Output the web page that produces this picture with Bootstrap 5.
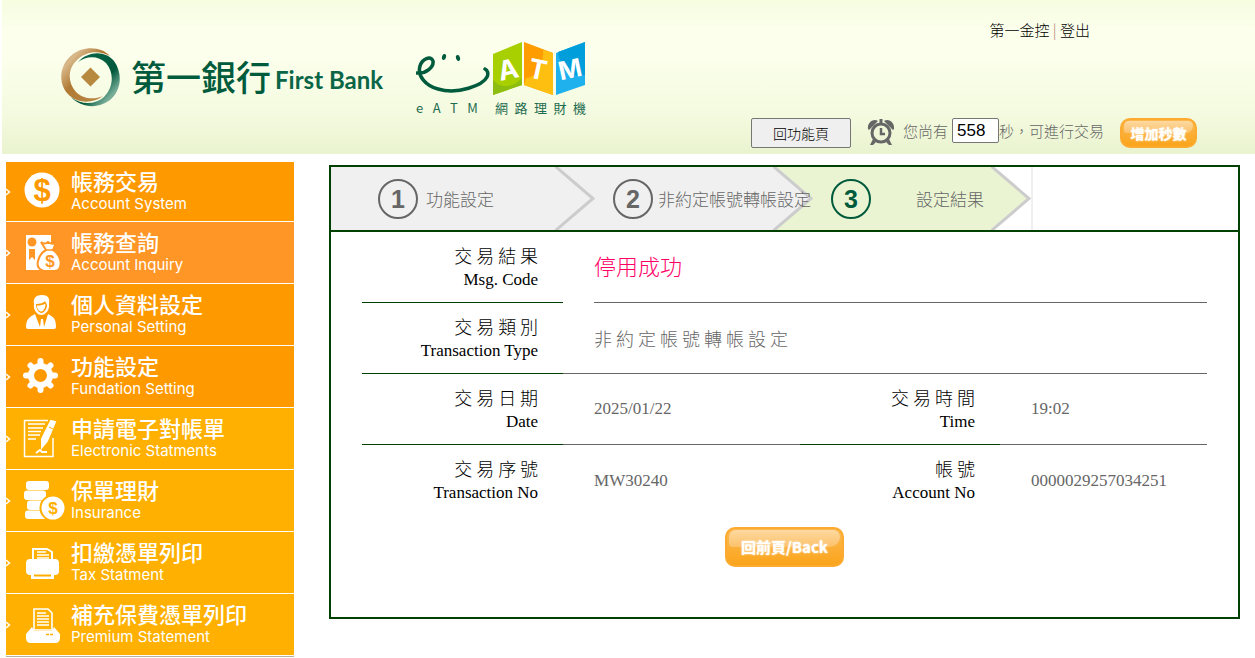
<!DOCTYPE html>
<html lang="zh-Hant">
<head>
<meta charset="utf-8">
<meta name="viewport" content="width=device-width, initial-scale=1">
<title>第一銀行 eATM</title>
<link href="https://cdn.jsdelivr.net/npm/bootstrap@5.3.0/dist/css/bootstrap.min.css" rel="stylesheet">
<style>
  body { font-family: "Liberation Serif", "Noto Sans CJK TC", serif; font-size: 17px; line-height: 22px; color: #000; background: #fff; }
  .zh { font-family: "Noto Sans CJK TC", sans-serif; font-weight: 300; }
  .site-head { margin-left: 2px; padding: 19px 58px 6px 59px; min-height: 154px; background: linear-gradient(#f6fde0 0, #fbffeb 28px, #fbffeb 60px, #f4fadf 115px, #e9f3cf 100%); }
  .brand-zh { font: 500 35px/40px "Noto Sans CJK TC", sans-serif; color: #005a3c; }
  .brand-en { font: 700 24px/32px Lato, sans-serif; color: #0b6648; }
  .brand { padding-top: 29px; gap: 11px; }
  .eatm { margin-left: 33px; padding-top: 22px; }
  .eatm-caption { font: 400 13px/18px "Noto Sans CJK TC", sans-serif; color: #1d6b50; }
  .util { margin-right: 107px; font-size: 15px; color: #b07c70; }
  .util a { color: #000; text-decoration: none; }
  .timer { font-size: 15px; line-height: 26px; color: #666; }
  .btn-plain { width: 100px; height: 30px; padding: 0; font-size: 14px; background: #efefef; border: 1px solid #767676; border-radius: 2px; color: #000; }
  .sec-box { width: 47px; height: 25px; padding: 0 4px; border: 1px solid #767676; border-radius: 2px; font: 17px/22px "Liberation Sans", sans-serif; }
  .btn-gloss { position: relative; padding: 0; border: 2px solid #fcab30; background: linear-gradient(#fbb851, #fbae35 55%, #fba41b); color: #fff; font: 700 14px/20px "Noto Sans CJK TC", sans-serif; text-shadow: 0 0 2px #fff; border-radius: 10px; }
  .btn-gloss::before { content: ""; position: absolute; inset: 1px 2px 50% 2px; border-radius: 8px 8px 12px 4px; background: linear-gradient(#fdd9a0, #fcc16a); }
  .btn-gloss span { position: relative; }
  .btn-more { width: 77px; height: 30px; }
  .btn-back { width: 119px; height: 40px; margin-top: 11px; font-size: 15px; }
  .side { width: 288px; margin: 8px 0 0 6px; border-bottom: 1px solid #b8b0a0; }
  .side a { display: flex; align-items: center; min-height: 62px; border-bottom: 1px solid #fff; background: #ffb000; color: #fff; text-decoration: none; }
  .side li:first-child a { min-height: 60px; }
  .side .tone-a { background: #ff9900; }
  .side .tone-b { background: #ff9625; }
  .side .arrow { margin-right: 11px; }
  .side .pic { margin-right: 9px; overflow: visible; }
  .side b { display: block; font: 500 22px/25px "Liberation Sans", "Noto Sans CJK TC", sans-serif; }
  .side small { display: block; font: 400 15px/18px Inter, sans-serif; }
  .panel { margin: 11px 15px 0 35px; padding-bottom: 50px; border: 2px solid #004000; }
  .steps { display: grid; grid-template-columns: 264fr 218fr 218fr 207fr; min-height: 65px; border-bottom: 2px solid #004000; color: #666; }
  .steps li { position: relative; display: flex; align-items: center; background: #f0f0f0; padding-left: 18px; white-space: nowrap; }
  .steps li:first-child { padding-left: 47px; gap: 8px; }
  .steps li:nth-child(2) { gap: 5px; }
  .steps li:nth-child(3) { gap: 45px; background: #eaf4d3; }
  .steps li:last-child { background: #fff; border-left: 2px solid #f0f0f0; }
  .steps .tip { position: absolute; right: 0; top: 0; height: 100%; width: 40px; }
  .steps span { position: relative; }
  .ring { width: 40px; height: 40px; border: 2px solid #666; border-radius: 50%; font: 700 25px/36px "Liberation Sans", sans-serif; text-align: center; }
  .ring.on { border-color: #005a3c; color: #005a3c; }
  .result { margin: 0 31px; }
  .result table { width: 100%; table-layout: fixed; border-collapse: separate; border-spacing: 0; }
  .result th, .result td { height: 71px; padding: 0; font-weight: 400; vertical-align: middle; border-bottom: 1px solid #666; }
  .result th { text-align: right; padding-right: 25px; border-color: #004000; }
  .result th .zh { font-size: 18px; }
  .result td { padding-left: 31px; color: #666; }
  .result td.zh { font-size: 18px; font-weight: 300; }
  .result .first td { padding-bottom: 6px; font-size: 22px; color: #f06; border-bottom: 0; background: linear-gradient(#666, #666) no-repeat 31px 100% / 100% 1px; }
  .result tr:last-child > * { border-bottom: 0; }
</style>
</head>
<body>
<header class="site-head d-flex">
  <div class="brand d-flex align-items-start">
    <svg width="59" height="59" viewBox="0 0 59 59" aria-hidden="true">
      <defs>
        <linearGradient id="gd" x1="0" y1="0" x2="1" y2="1"><stop offset="0" stop-color="#a87532"/><stop offset=".2" stop-color="#d9b98b"/><stop offset=".45" stop-color="#b07a34"/><stop offset="1" stop-color="#b98b48"/></linearGradient>
        <linearGradient id="gg" x1="0" y1="0" x2="1" y2="1"><stop offset="0" stop-color="#0c6a4b"/><stop offset=".6" stop-color="#00583b"/><stop offset=".82" stop-color="#7bb09c"/><stop offset="1" stop-color="#00583b"/></linearGradient>
      </defs>
      <path d="M49 8C41-1 23-3 11 7C-3 18-3 38 9 48C18 56 33 55 42 48C33 52 22 51 15 44C6 34 7 20 16 12C25 3 38 2 49 8Z" fill="url(#gd)"/>
      <path d="M17 14C28 2 45 3 53 13C61 24 61 40 51 50C40 61 21 61 10 49C20 57 34 57 43 49C53 39 53 24 45 15C37 7 25 8 17 14Z" fill="url(#gg)"/>
      <path d="M29.500 19.500L39 29L29.500 38.500L20 29Z" fill="#b6893f"/>
    </svg>
    <div class="d-flex align-items-end gap-1 pt-2">
      <span class="brand-zh">第一銀行</span><span class="brand-en">First Bank</span>
    </div>
  </div>
  <div class="eatm">
    <svg class="d-block" width="170" height="58" viewBox="0 0 170 58" role="img" aria-label="eATM">
      <path d="M1 32C10 33 18 26 17 20C15 14 6 18 4 25C1 35 10 45 22 48C42 54 67 44 71 36C73 32 71 29 69 28" fill="none" stroke="#005a3c" stroke-width="3.500" stroke-linecap="round"/>
      <ellipse cx="28" cy="16" rx="2" ry="3" transform="rotate(15 28 16)" fill="#005a3c"/>
      <ellipse cx="42" cy="17" rx="2" ry="3" transform="rotate(-15 42 17)" fill="#005a3c"/>
      <path d="M77 13L106 1V44L77 54Z" fill="#a8cf00"/><path d="M77 39C83 46 95 49 106 37V44L77 54Z" fill="#8cbd10"/>
      <path d="M108 1L137 12V54L108 44Z" fill="#ff9d00"/><path d="M110 37C122 36 128 24 127 9L137 12V54L108 44Z" fill="#ffbf10"/>
      <path d="M140 12L169 1V44L140 54Z" fill="#1fb0ee"/><path d="M142 11L169 1V34C155 38 144 26 142 11Z" fill="#009edb"/>
      <g font-family="Inter, sans-serif" font-weight="700" font-size="27" fill="#fff" text-anchor="middle">
        <text x="92" y="38" transform="rotate(-12 92 28)">A</text>
        <text x="122" y="38" transform="rotate(12 122 28)">T</text>
        <text x="154" y="37" font-size="25" transform="rotate(-12 154 28)">M</text>
      </g>
    </svg>
    <div class="eatm-caption d-flex justify-content-between"><span>e&ensp; A&ensp; T&ensp; M</span><span>網&ensp;路&ensp;理&ensp;財&ensp;機</span></div>
  </div>
  <div class="ms-auto d-flex flex-column justify-content-between">
    <div class="util zh align-self-end"><a href="#">第一金控</a> | <a href="#">登出</a></div>
    <div class="timer zh d-flex align-items-start">
      <button type="button" class="btn-plain zh">回功能頁</button>
      <svg class="ms-3 me-2" width="28" height="28" viewBox="0 0 28 28" aria-hidden="true" fill="#666">
        <path d="M1 11C0 5 6 0 11 3L2 12ZM27 11C28 5 22 0 17 3L26 12ZM12.500 1H15.500V5H12.500Z"/>
        <circle cx="14" cy="15" r="9" fill="none" stroke="#666" stroke-width="3"/>
        <path d="M14 10V16H18" fill="none" stroke="#666" stroke-width="2.500"/>
        <path d="M6 21L3 27H6L9 24ZM22 21L25 27H22L19 24Z"/>
      </svg>
      <label for="sec" class="me-1">您尚有</label>
      <input id="sec" class="sec-box" type="text" value="558">
      <span class="me-3">秒，可進行交易</span>
      <button type="button" class="btn-gloss btn-more"><span>增加秒數</span></button>
    </div>
  </div>
</header>

<div class="d-flex align-items-start">
  <nav class="side flex-shrink-0">
    <ul class="list-unstyled mb-0">
      <li><a href="#" class="tone-a"><svg class="arrow" width="5" height="8" viewBox="0 0 5 8"><path d="M0 1L3.500 4L0 7" fill="none" stroke="#fff" stroke-width="1.500"/></svg>
        <svg class="pic" width="40" height="40" viewBox="0 0 40 40"><circle cx="20" cy="18" r="17.500" fill="#fff"/><text x="20" y="29" text-anchor="middle" font-family="Liberation Sans" font-weight="700" font-size="31" fill="#f90">$</text></svg>
        <span><b>帳務交易</b><small>Account System</small></span></a></li>
      <li><a href="#" class="tone-b"><svg class="arrow" width="5" height="8" viewBox="0 0 5 8"><path d="M0 1L3.500 4L0 7" fill="none" stroke="#fff" stroke-width="1.500"/></svg>
        <svg class="pic" width="40" height="40" viewBox="0 0 40 40"><path d="M4 2H29V37H4Z" fill="#fff"/><circle cx="10" cy="9" r="4.500" fill="#ff9625"/><path d="M7 16H13V27L10 24L7 27Z" fill="#ff9625"/><path d="M19 9Q23 12 26 9Q30 12 34 10L31 17C37 21 40 28 38 34Q37 38 32 38H22Q14 36 16 28Q18 20 24 17Z" fill="#fff" stroke="#ff9625" stroke-width="2"/><path d="M23 17H32" stroke="#ff9625" stroke-width="1.500"/><text x="28" y="34" text-anchor="middle" font-family="Liberation Sans" font-weight="700" font-size="17" fill="#ff9625">$</text></svg>
        <span><b>帳務查詢</b><small>Account Inquiry</small></span></a></li>
      <li><a href="#" class="tone-a"><svg class="arrow" width="5" height="8" viewBox="0 0 5 8"><path d="M0 1L3.500 4L0 7" fill="none" stroke="#fff" stroke-width="1.500"/></svg>
        <svg class="pic" width="40" height="40" viewBox="0 0 40 40" fill="#fff"><path d="M12 9C11 3 14 0 20 0C26 0 28 3 27 9C28 14 24 20 19.500 20C15 20 11 15 12 9Z"/><path d="M14 9C18 9 22 8 23 6L25 10C25 14 22 18 19.500 18C17 18 14 14 14 9Z" fill="#f90"/><path d="M15 10.500C18 10.500 22 10 23 8.500L23.500 10C23 14 21 16.500 19.500 16.500C17 16.500 15 14 15 10.500Z"/><path d="M13 19L18 32L19 24H21L22 32L26 19C31 22 34 23 34 32Q34 34 32 34H6Q4 34 4 32C4 25 7 22 13 19Z"/></svg>
        <span><b>個人資料設定</b><small>Personal Setting</small></span></a></li>
      <li><a href="#" class="tone-a"><svg class="arrow" width="5" height="8" viewBox="0 0 5 8"><path d="M0 1L3.500 4L0 7" fill="none" stroke="#fff" stroke-width="1.500"/></svg>
        <svg class="pic" width="40" height="40" viewBox="0 0 40 40"><circle cx="18.500" cy="18.500" r="9.500" fill="none" stroke="#fff" stroke-width="6"/><g stroke="#fff" stroke-width="6" stroke-linecap="round"><path d="M18.500 4V7M18.500 30V33M4 18.500H7M30 18.500H33M8.500 8.500L10 10M27 27L28.500 28.500M8.500 28.500L10 27M27 10L28.500 8.500"/></g></svg>
        <span><b>功能設定</b><small>Fundation Setting</small></span></a></li>
      <li><a href="#"><svg class="arrow" width="5" height="8" viewBox="0 0 5 8"><path d="M0 1L3.500 4L0 7" fill="none" stroke="#fff" stroke-width="1.500"/></svg>
        <svg class="pic" width="40" height="40" viewBox="0 0 40 40"><path d="M26 1.500H2.500V37.500H31V19" fill="none" stroke="#fff" stroke-width="1.500"/><path d="M6 5H23M6 9H21M6 12.500H19M6 16H18M6 20H14" stroke="#fff" stroke-width="1.300"/><path d="M29 2L33 3L25 22L20 28V20Z" fill="#fff" stroke="#fff" stroke-width="2"/><path d="M27 8L31 10" stroke="#ffb000"/><path d="M14 34L18 31L20 33L25 33" fill="none" stroke="#fff" stroke-width="2"/></svg>
        <span><b>申請電子對帳單</b><small>Electronic Statments</small></span></a></li>
      <li><a href="#"><svg class="arrow" width="5" height="8" viewBox="0 0 5 8"><path d="M0 1L3.500 4L0 7" fill="none" stroke="#fff" stroke-width="1.500"/></svg>
        <svg class="pic" width="40" height="40" viewBox="0 0 40 40"><g fill="#fff"><rect x="4" y="0" width="23" height="9" rx="3"/><rect x="2" y="9.500" width="22" height="9.500" rx="3"/><rect x="5" y="19.500" width="22" height="9.500" rx="3"/><rect x="3" y="29.500" width="23" height="8.500" rx="3"/></g><circle cx="31" cy="27" r="12.500" fill="#fff" stroke="#ffb000" stroke-width="2"/><text x="31" y="33" text-anchor="middle" font-family="Liberation Sans" font-weight="700" font-size="17" fill="#ffb000">$</text></svg>
        <span><b>保單理財</b><small>Insurance</small></span></a></li>
      <li><a href="#"><svg class="arrow" width="5" height="8" viewBox="0 0 5 8"><path d="M0 1L3.500 4L0 7" fill="none" stroke="#fff" stroke-width="1.500"/></svg>
        <svg class="pic" width="40" height="40" viewBox="0 0 40 40"><path d="M11 17V6H25L30 9V17" fill="none" stroke="#fff" stroke-width="2"/><path d="M15 9H24M15 12H27M15 15H27" stroke="#fff" stroke-width="1.300"/><rect x="4" y="16" width="33" height="16" rx="4" fill="#fff"/><path d="M9 30H32V36H9Z" fill="#fff"/><path d="M12 32.500H29" stroke="#ffb000" stroke-width="2"/></svg>
        <span><b>扣繳憑單列印</b><small>Tax Statment</small></span></a></li>
      <li><a href="#"><svg class="arrow" width="5" height="8" viewBox="0 0 5 8"><path d="M0 1L3.500 4L0 7" fill="none" stroke="#fff" stroke-width="1.500"/></svg>
        <svg class="pic" width="40" height="40" viewBox="0 0 40 40"><path d="M12 25V4H26L30 8V25Z" fill="none" stroke="#fff" stroke-width="1.600"/><path d="M15 8H24M15 11H27M15 14H27M15 17H27M15 20H27" stroke="#fff" stroke-width="1.400"/><path d="M10 22L12 26H30L32 22L38 29V33Q38 38 33 38H9Q4 38 4 33V29Z" fill="#fff"/><path d="M24 29.500H27M28 29.500H31" stroke="#ffb000" stroke-width="1.300"/></svg>
        <span><b>補充保費憑單列印</b><small>Premium Statement</small></span></a></li>
    </ul>
  </nav>

  <main class="panel flex-grow-1">
    <ol class="steps zh list-unstyled mb-0">
      <li><svg class="tip" viewBox="0 0 40 63" preserveAspectRatio="none"><path d="M0 -1L38 31.500L0 64" fill="none" stroke="#ccc" stroke-width="3"/></svg><span class="ring">1</span><span>功能設定</span></li>
      <li><svg class="tip" viewBox="0 0 40 63" preserveAspectRatio="none"><path d="M0 -1H40V64H0L38 31.500Z" fill="#eaf4d3"/><path d="M0 -1L38 31.500L0 64" fill="none" stroke="#ccc" stroke-width="3"/></svg><span class="ring">2</span><span>非約定帳號轉帳設定</span></li>
      <li><svg class="tip" viewBox="0 0 40 63" preserveAspectRatio="none"><path d="M0 -1H40V64H0L38 31.500Z" fill="#fff"/><path d="M0 -1L38 31.500L0 64" fill="none" stroke="#ccc" stroke-width="3"/></svg><span class="ring on">3</span><span>設定結果</span></li>
      <li></li>
    </ol>
    <div class="result">
      <table>
        <colgroup><col style="width:23.800%"><col style="width:28%"><col style="width:23.700%"><col style="width:24.500%"></colgroup>
        <tr class="first"><th scope="row"><span class="zh">交 易 結 果</span><br>Msg. Code</th><td colspan="3" class="zh">停用成功</td></tr>
        <tr><th scope="row"><span class="zh">交 易 類 別</span><br>Transaction Type</th><td colspan="3" class="zh">非 約 定 帳 號 轉 帳 設 定</td></tr>
        <tr><th scope="row"><span class="zh">交 易 日 期</span><br>Date</th><td>2025/01/22</td><th scope="row"><span class="zh">交 易 時 間</span><br>Time</th><td>19:02</td></tr>
        <tr><th scope="row"><span class="zh">交 易 序 號</span><br>Transaction No</th><td>MW30240</td><th scope="row"><span class="zh">帳 號</span><br>Account No</th><td>0000029257034251</td></tr>
      </table>
    </div>
    <div class="text-center"><button type="button" class="btn-gloss btn-back"><span>回前頁/Back</span></button></div>
  </main>
</div>
<script src="https://cdn.jsdelivr.net/npm/bootstrap@5.3.0/dist/js/bootstrap.bundle.min.js"></script>
</body>
</html>
